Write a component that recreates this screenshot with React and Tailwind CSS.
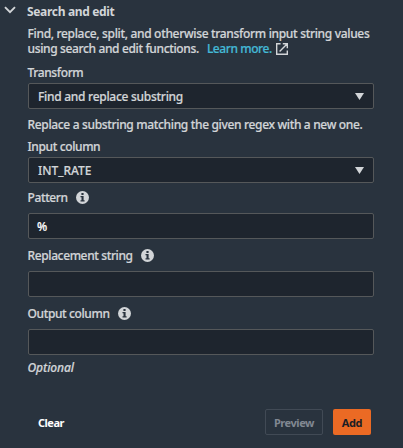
import React from "react";

function InfoIcon() {
  return (
    <svg className="ml-[8px] size-[13px] shrink-0" viewBox="0 0 13 13">
      <circle cx="6.5" cy="6.5" r="6.5" fill="#d2d5d8" />
      <rect x="5.4" y="1.9" width="2.2" height="2.1" rx="0.5" fill="#29333e" />
      <path d="M4.5 5h3.1v4.2h1v1.3H4.5V9.2h1V6.3h-1z" fill="#29333e" />
    </svg>
  );
}

function Label({ children, info, className }) {
  return (
    <div className={"flex h-4 items-center tracking-[-0.38px] whitespace-nowrap " + className}>
      <span>{children}</span>
      {info && <InfoIcon />}
    </div>
  );
}

function Box({ children, arrow, className = "" }) {
  return (
    <div className={"flex h-[26px] w-[346px] shrink-0 items-center justify-between rounded-[2px] border border-[#55585a] bg-[#1e252e] px-[9px] " + className}>
      <span>{children}</span>
      {arrow && (
        <svg className="h-[7px] w-[9px]" viewBox="0 0 9 7">
          <path d="M0 0h9L4.5 7z" fill="#d2d5d8" />
        </svg>
      )}
    </div>
  );
}

export default function App() {
  return (
    <div className="flex h-[448px] w-[403px] flex-col overflow-hidden bg-[#29333e] pt-[3px] pl-[28px] font-['Noto_Sans',sans-serif] text-[12px] leading-[15px] font-medium text-[#d2d5d8] [-webkit-text-stroke:0.2px]">
      <div className="-ml-[24px] flex h-4 items-center">
        <svg className="mr-[11px] mb-[2px] h-[8px] w-[12px]" viewBox="0 0 12 8">
          <path d="M1 1.2l5 5 5-5" fill="none" stroke="#d2d5d8" strokeWidth="1.9" />
        </svg>
        <span className="font-bold tracking-[-0.33px] [-webkit-text-stroke:0px]">Search and edit</span>
      </div>
      <div className="mt-[7px] -ml-[0.5px] whitespace-nowrap">
        <div className="tracking-[-0.325px]">Find, replace, split, and otherwise transform input string values</div>
        <div className="flex items-center">
          <span className="tracking-[-0.36px]">using search and edit functions.</span>
          <a className="ml-[8px] tracking-[-0.42px] text-[#44b9d6]">Learn more.</a>
          <svg className="ml-[4px] size-[12px]" viewBox="0 0 12 12" fill="none" stroke="#d2d5d8" strokeWidth="1.4">
            <path d="M4.6.7H.7v10.6h10.6V7.4M6.8.7h4.5v4.5M11 1L3.6 8.4" />
          </svg>
        </div>
      </div>
      <Label className="mt-[8px] -ml-[0.5px]">Transform</Label>
      <Box arrow className="mt-[3px] tracking-[-0.28px]">Find and replace substring</Box>
      <div className="mt-[8px] -ml-[0.5px] h-4 tracking-[-0.34px] whitespace-nowrap">Replace a substring matching the given regex with a new one.</div>
      <Label className="mt-[5px] -ml-[0.5px]">Input column</Label>
      <Box arrow className="mt-[3px]">INT_RATE</Box>
      <Label info className="mt-[6px] -ml-[0.5px]">Pattern</Label>
      <Box className="mt-[8px] !pl-[8px] text-white">%</Box>
      <Label info className="mt-[8px] -ml-[0.5px]">Replacement string</Label>
      <Box className="mt-[8px]" />
      <Label info className="mt-[8px] -ml-[0.5px]">Output column</Label>
      <Box className="mt-[8px]" />
      <div className="mt-[5px] -ml-[0.5px] h-4 tracking-[-0.1px] italic">Optional</div>
      <div className="mt-[33px] flex h-[26px] w-[343px] items-center text-[11px] font-bold [-webkit-text-stroke:0px]">
        <button className="ml-[10px] tracking-[-0.5px] text-white">Clear</button>
        <button className="ml-auto h-[26px] w-[58px] rounded-[2px] border border-[#414a55] tracking-[-0.45px] text-[#818892]">Preview</button>
        <button className="ml-[10px] h-[26px] w-[38px] rounded-[2px] bg-[#eb6a24] tracking-[-0.4px] text-[#1b1e24]">Add</button>
      </div>
    </div>
  );
}
